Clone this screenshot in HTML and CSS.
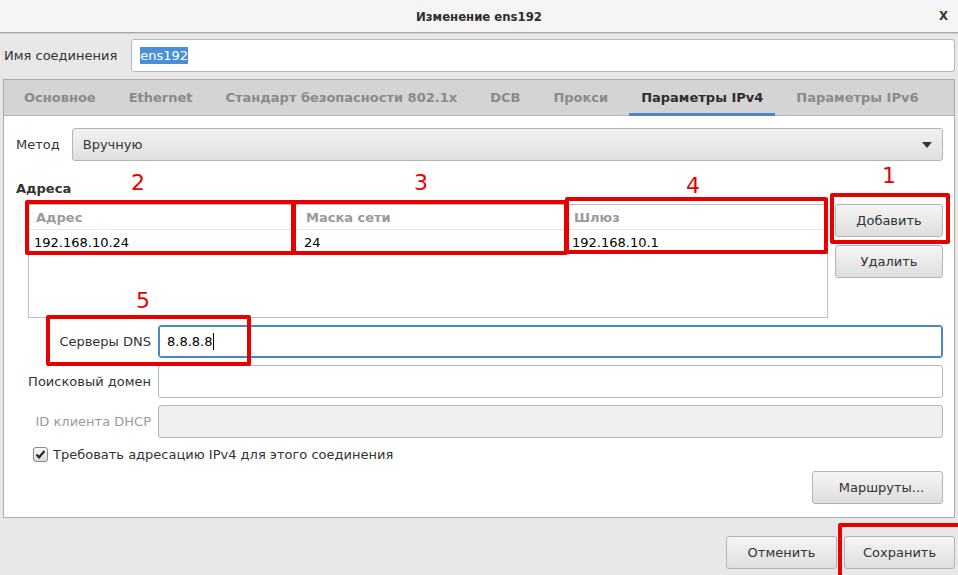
FILE: index.html
```html
<!DOCTYPE html>
<html lang="ru">
  <head>
    <meta charset="UTF-8" />
    <title>Изменение ens192</title>
    <link rel="stylesheet" href="styles.css">
  </head>
  <body>
    <div class="window">
      <div class="titlebar">
        <span class="title">Изменение ens192</span>
        <span class="close">X</span>
      </div>

      <div class="name-row">
        <label>Имя соединения</label>
        <div class="entry"><span class="selected">ens192</span></div>
      </div>

      <div class="notebook">
        <div class="tabs">
          <div class="tab">Основное</div>
          <div class="tab">Ethernet</div>
          <div class="tab">Стандарт безопасности 802.1x</div>
          <div class="tab">DCB</div>
          <div class="tab">Прокси</div>
          <div class="tab active">Параметры IPv4</div>
          <div class="tab">Параметры IPv6</div>
        </div>

        <div class="page">
          <div class="method-row">
            <label>Метод</label>
            <div class="combo">
              <span>Вручную</span>
              <svg width="10" height="6" viewBox="0 0 10 6"><path d="M0 0h10L5 6z" fill="#333"/></svg>
            </div>
          </div>

          <div class="section-title">Адреса</div>

          <div class="addresses">
            <div class="addr-table">
              <div class="addr-row head">
                <span>Адрес</span><span>Маска сети</span><span>Шлюз</span>
              </div>
              <div class="addr-row">
                <span>192.168.10.24</span><span>24</span><span>192.168.10.1</span>
              </div>
            </div>
            <div class="addr-buttons">
              <button class="btn">Добавить</button>
              <button class="btn">Удалить</button>
            </div>
          </div>

          <div class="form-grid">
            <label>Серверы DNS</label>
            <div class="entry focused">8.8.8.8<span class="caret"></span></div>
            <label>Поисковый домен</label>
            <div class="entry"></div>
            <label class="disabled">ID клиента DHCP</label>
            <div class="entry disabled"></div>
          </div>

          <div class="check-row">
            <svg class="checkbox" width="15" height="15" viewBox="0 0 15 15">
              <defs>
                <linearGradient id="cb" x1="0" y1="0" x2="0" y2="1">
                  <stop offset="0" stop-color="#fafafa"/>
                  <stop offset="1" stop-color="#dcdcdc"/>
                </linearGradient>
              </defs>
              <rect x="0.5" y="0.5" width="14" height="14" rx="2.5" fill="url(#cb)" stroke="#8a8a8a"/>
              <path d="M3.5 7.5l2.6 2.8L11.5 4" fill="none" stroke="#2a2a2a" stroke-width="2.2"/>
            </svg>
            <span>Требовать адресацию IPv4 для этого соединения</span>
          </div>

          <div class="routes-row">
            <button class="btn routes">Маршруты...</button>
          </div>
        </div>
      </div>

      <div class="dialog-buttons">
        <button class="btn">Отменить</button>
        <button class="btn">Сохранить</button>
      </div>

      <!-- annotation marks drawn over the screenshot -->
      <div class="mark mark-add"></div>
      <div class="mark mark-addr"></div>
      <div class="mark mark-mask"></div>
      <div class="mark mark-gw"></div>
      <div class="mark mark-dns"></div>
      <div class="mark mark-save"></div>
      <span class="num num-1">1</span>
      <span class="num num-2">2</span>
      <span class="num num-3">3</span>
      <span class="num num-4">4</span>
      <span class="num num-5">5</span>
    </div>
  </body>
</html>
```

FILE: styles.css
```css
body {
    margin: 0;
    font-family: "DejaVu Sans", Verdana, sans-serif;
    font-size: 13px;
    color: #2e3436;
    background-color: #e8e8e8;
}

.window {
    position: relative;
    width: 958px;
    height: 575px;
    overflow: hidden;
    background-color: #e8e8e8;
}

.titlebar {
    height: 32px;
    display: flex;
    align-items: center;
    justify-content: center;
    background-color: #f5f5f5;
    border-bottom: 1px solid #a9a9a9;
    box-shadow: 0 1px 0 #d0d0d0;
    position: relative;
}

.title {
    font-family: "DejaVu Sans Condensed", "DejaVu Sans", sans-serif;
    font-stretch: condensed;
    font-weight: bold;
    font-size: 13px;
    color: #2e2e2e;
}

.close {
    position: absolute;
    right: 10px;
    top: 8px;
    font-family: "DejaVu Sans Condensed", "DejaVu Sans", sans-serif;
    font-weight: bold;
    font-size: 13px;
    color: #333;
}

.name-row {
    display: flex;
    align-items: center;
    gap: 14px;
    padding: 6px 3px 0 4px;
}

.name-row label {
    color: #333;
}

.entry {
    flex: 1;
    height: 31px;
    display: flex;
    align-items: center;
    padding: 0 8px;
    background: #fff;
    border: 1px solid #b6b6b6;
    border-radius: 3px;
    color: #000;
}

.selected {
    background-color: #4a90d9;
    color: #fff;
    line-height: 17px;
}

.notebook {
    margin: 7px 3px 0 3px;
    border: 1px solid #ababab;
    background: #fff;
}

.tabs {
    height: 35px;
    display: flex;
    gap: 9px;
    padding-left: 8px;
    background-color: #d4d4d4;
    border-bottom: 1px solid #b5b5b5;
}

.tab {
    display: flex;
    align-items: center;
    padding: 0 12px;
    font-weight: bold;
    color: #8a8a8a;
    border-bottom: 3px solid transparent;
    margin-bottom: -1px;
    padding-top: 2px;
}

.tab.active {
    color: #2e2e2e;
    border-bottom-color: #4a86c8;
}

.page {
    padding: 12px 11px 13px 12px;
}

.method-row {
    display: flex;
    align-items: center;
    gap: 12px;
}

.method-row label {
    color: #333;
}

.combo {
    flex: 1;
    height: 31px;
    display: flex;
    align-items: center;
    justify-content: space-between;
    padding: 0 10px;
    border: 1px solid #b5b5b5;
    border-radius: 3px;
    background: linear-gradient(#f2f2f2, #e0e0e0);
    color: #333;
}

.section-title {
    margin-top: 20px;
    line-height: 16px;
    font-weight: bold;
    color: #333;
}

.addresses {
    display: flex;
    gap: 7px;
    margin: 7px 0 0 12px;
}

.addr-table {
    flex: 1;
    height: 112px;
    background: #fff;
    border: 1px solid #bdbdbd;
}

.addr-row {
    display: grid;
    grid-template-columns: 270px 268px 1fr;
    height: 24px;
    align-items: center;
    color: #000;
}

.addr-row span {
    padding-left: 5px;
}

.addr-row.head {
    height: 24px;
    border-bottom: 1px solid #e4e4e4;
    font-weight: bold;
    color: #9a9a9a;
}

.addr-row.head span {
    padding-left: 7px;
}

.addr-buttons {
    width: 108px;
    display: flex;
    flex-direction: column;
    gap: 8px;
}

.btn {
    height: 33px;
    padding: 0 12px;
    font-family: "DejaVu Sans", Verdana, sans-serif;
    font-size: 13px;
    color: #333;
    border: 1px solid #b4b4b4;
    border-radius: 3px;
    background: linear-gradient(#f5f5f5, #dedede);
}

.form-grid {
    display: grid;
    grid-template-columns: 135px 1fr;
    column-gap: 7px;
    row-gap: 7px;
    margin-top: 7px;
    align-items: center;
}

.form-grid label {
    justify-self: end;
    color: #333;
}

.form-grid label.disabled {
    color: #9a9a9a;
}

.form-grid .entry {
    height: 31px;
}

.entry.focused {
    border-color: #4a86c8;
    box-shadow: inset 0 0 0 1px #4a86c8;
}

.entry.disabled {
    background-color: #f0f0f0;
}

.caret {
    display: inline-block;
    width: 1px;
    height: 17px;
    background: #000;
    margin-left: 1px;
}

.check-row {
    display: flex;
    align-items: center;
    gap: 5px;
    margin-top: 9px;
    padding-left: 17px;
    color: #333;
}

.routes-row {
    display: flex;
    justify-content: flex-end;
    margin-top: 9px;
}

.routes {
    width: 131px;
    padding-left: 20px;
}

.dialog-buttons {
    display: flex;
    justify-content: flex-end;
    gap: 7px;
    margin-top: 18px;
    padding-right: 3px;
}

.dialog-buttons .btn {
    width: 111px;
}

.mark {
    position: absolute;
    border: 4px solid #e80000;
    border-radius: 2px;
}

.mark-add { left: 830px; top: 193px; width: 112px; height: 43px; }
.mark-addr { left: 25px; top: 200px; width: 262px; height: 47px; }
.mark-mask { left: 292px; top: 200px; width: 268px; height: 47px; }
.mark-gw { left: 565px; top: 197px; width: 255px; height: 49px; }
.mark-dns { left: 46px; top: 315px; width: 197px; height: 43px; }
.mark-save { left: 838px; top: 523px; width: 116px; height: 50px; }

.num {
    position: absolute;
    font-size: 22px;
    line-height: 22px;
    color: #e80000;
}

.num-1 { left: 882px; top: 165px; }
.num-2 { left: 131px; top: 172px; }
.num-3 { left: 414px; top: 172px; }
.num-4 { left: 686px; top: 175px; }
.num-5 { left: 136px; top: 290px; }
```
